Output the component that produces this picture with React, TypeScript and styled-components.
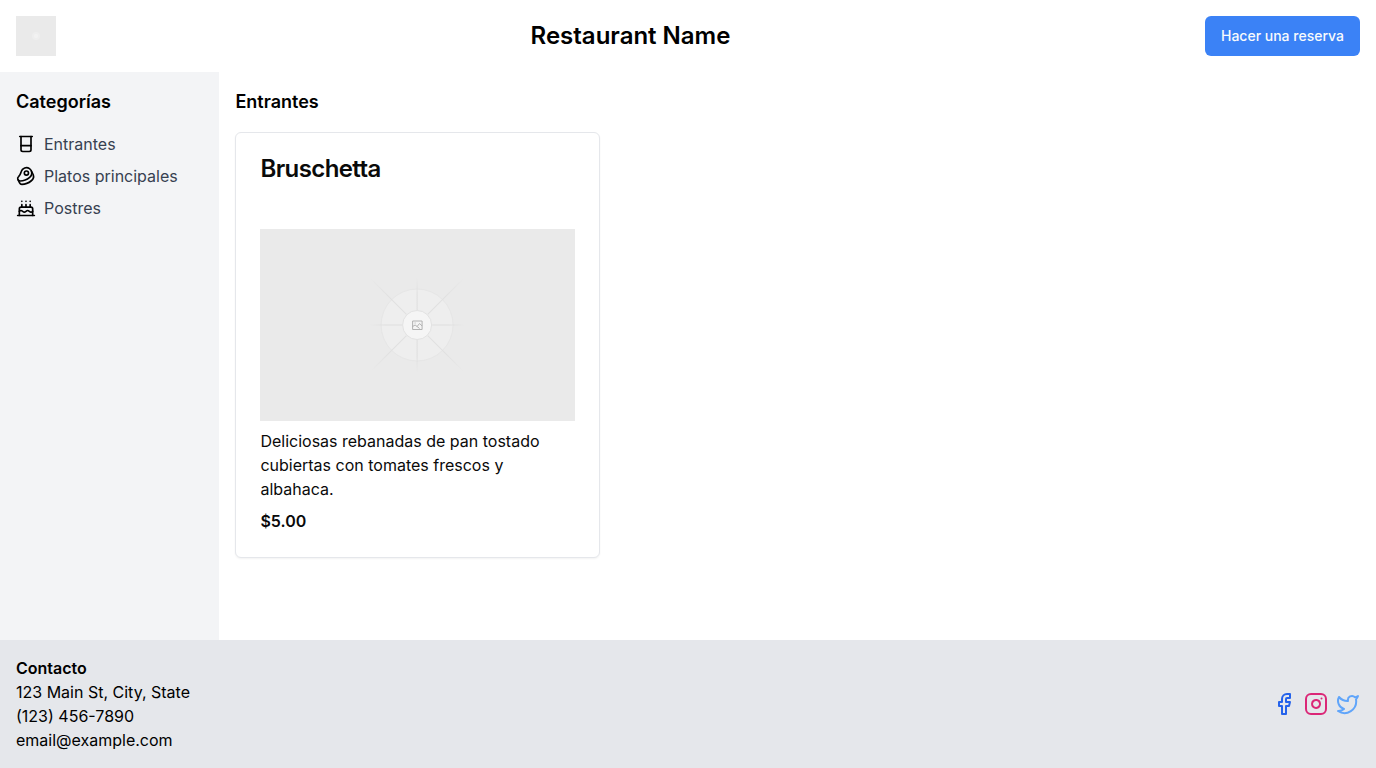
import React from 'react';
import styled, { createGlobalStyle } from 'styled-components';
import { Beaker, Beef, Cake, Facebook, Instagram, Twitter } from 'lucide-react';

const GlobalStyle = createGlobalStyle`
  *, *::before, *::after { box-sizing: border-box; }
  body {
    margin: 0;
    background: #ffffff;
    color: #000000;
    font-family: Inter, "Liberation Sans", sans-serif;
    font-size: 16px;
    line-height: 24px;
    font-optical-sizing: none;
  }
  h1, h2, h3, h4, p, ul { margin: 0; padding: 0; }
`;

const Page = styled.div`
  display: flex;
  flex-direction: column;
  min-height: 100vh;
`;

const Header = styled.header`
  display: flex;
  align-items: center;
  justify-content: space-between;
  padding: 16px;
`;

const Logo = styled.svg`
  display: block;
  width: 40px;
  height: 40px;
`;

const SiteTitle = styled.h1`
  font-size: 24px;
  line-height: 32px;
  font-weight: 600;
`;

const ReserveButton = styled.button`
  height: 40px;
  padding: 0 16px;
  border: 0;
  border-radius: 6px;
  background: #3b82f6;
  color: #f8fafc;
  font: 500 14px/20px Inter, "Liberation Sans", sans-serif;
  cursor: pointer;
`;

const Body = styled.div`
  display: flex;
  flex: 1;
`;

const Sidebar = styled.aside`
  width: 256px;
  padding: 16px;
  background: #f3f4f6;
`;

const SectionTitle = styled.h2`
  margin-bottom: 16px;
  font-size: 18px;
  line-height: 28px;
  font-weight: 600;
`;

const CategoryList = styled.ul`
  display: grid;
  gap: 8px;
  list-style: none;
`;

const CategoryItem = styled.li`
  display: flex;
  align-items: center;
  gap: 8px;
`;

const CategoryLink = styled.a`
  color: #374151;
  text-decoration: none;
`;

const Main = styled.main`
  width: 100%;
  padding: 16px;
`;

const DishGrid = styled.div`
  display: grid;
  grid-template-columns: repeat(3, minmax(0, 1fr));
  gap: 16px;
`;

const Card = styled.article`
  padding: 24px;
  border: 1px solid #e5e7eb;
  border-radius: 6px;
  background: #ffffff;
  color: #0a0a0a;
  box-shadow: 0 1px 2px rgba(0, 0, 0, 0.05);
`;

const DishName = styled.h3`
  margin-bottom: 48px;
  font-size: 24px;
  line-height: 24px;
  font-weight: 600;
  letter-spacing: -0.025em;
`;

const DishImage = styled.svg`
  display: block;
  width: 100%;
  height: 192px;
  background: #eaeaea;
`;

const Description = styled.p`
  margin-top: 8px;
`;

const Price = styled.p`
  margin-top: 8px;
  font-weight: 600;
`;

const Footer = styled.footer`
  display: flex;
  align-items: center;
  justify-content: space-between;
  padding: 16px;
  background: #e5e7eb;
`;

const ContactTitle = styled.h4`
  font-size: 16px;
  font-weight: 600;
`;

const Socials = styled.div`
  display: flex;
  gap: 8px;
`;

const SocialLink = styled.a<{ $color: string }>`
  display: flex;
  color: ${({ $color }) => $color};
`;

const categories = [
  { label: 'Entrantes', Icon: Beaker },
  { label: 'Platos principales', Icon: Beef },
  { label: 'Postres', Icon: Cake },
];

const socials = [
  { label: 'Facebook', Icon: Facebook, color: '#2563eb' },
  { label: 'Instagram', Icon: Instagram, color: '#db2777' },
  { label: 'Twitter', Icon: Twitter, color: '#60a5fa' },
];

const spokes = [0, 45, 90, 135, 180, 225, 270, 315];

function PlaceholderImage() {
  return (
    <DishImage viewBox="0 0 315 192" preserveAspectRatio="xMidYMid slice" role="img" aria-label="Bruschetta">
      <defs>
        <radialGradient id="long-spoke" gradientUnits="userSpaceOnUse" cx="0" cy="0" r="66">
          <stop offset="0.6" stopColor="#e0e0e0" />
          <stop offset="1" stopColor="#e0e0e0" stopOpacity="0" />
        </radialGradient>
        <radialGradient id="short-spoke" gradientUnits="userSpaceOnUse" cx="0" cy="0" r="48">
          <stop offset="0.65" stopColor="#dedede" />
          <stop offset="1" stopColor="#dedede" stopOpacity="0" />
        </radialGradient>
      </defs>
      <g transform="translate(157.5 96)" fill="none">
        <circle r="36" fill="#eeeeee" stroke="#e6e6e6" />
        {spokes.map((angle) => (
          <path
            key={angle}
            d={angle % 90 ? 'M15 0H66' : 'M15 0H48'}
            stroke={angle % 90 ? 'url(#long-spoke)' : 'url(#short-spoke)'}
            transform={`rotate(${angle})`}
          />
        ))}
        <circle r="14.5" fill="#f5f5f5" stroke="#e2e2e2" />
        <path d="M-4.5-4H5V4.5H-4.5ZM-4.5 1.5L-2 0L0 1.5L2.5-1.5L5 1M-2.5-2H-1.5M0 1.5L2.5 3.5" stroke="#aaaaaa" strokeWidth="0.9" />
      </g>
    </DishImage>
  );
}

export default function App() {
  return (
    <>
      <GlobalStyle />
      <Page>
        <Header>
          <Logo viewBox="0 0 40 40" role="img" aria-label="Logo">
            <path fill="#eaeaea" d="M0 0h40v40H0z" />
            <circle cx="20" cy="20" r="4" fill="#eeeeee" />
            <circle cx="20" cy="20" r="2" fill="#f2f2f2" />
          </Logo>
          <SiteTitle>Restaurant Name</SiteTitle>
          <ReserveButton type="button">Hacer una reserva</ReserveButton>
        </Header>
        <Body>
          <Sidebar>
            <SectionTitle>Categorías</SectionTitle>
            <nav aria-label="Categorías">
              <CategoryList>
                {categories.map(({ label, Icon }) => (
                  <CategoryItem key={label}>
                    <Icon size={20} aria-hidden />
                    <CategoryLink href="#">{label}</CategoryLink>
                  </CategoryItem>
                ))}
              </CategoryList>
            </nav>
          </Sidebar>
          <Main>
            <SectionTitle>Entrantes</SectionTitle>
            <DishGrid>
              <Card>
                <DishName>Bruschetta</DishName>
                <PlaceholderImage />
                <Description>
                  Deliciosas rebanadas de pan tostado cubiertas con tomates frescos y albahaca.
                </Description>
                <Price>$5.00</Price>
              </Card>
            </DishGrid>
          </Main>
        </Body>
        <Footer>
          <div>
            <ContactTitle>Contacto</ContactTitle>
            <p>123 Main St, City, State</p>
            <p>(123) 456-7890</p>
            <p>email@example.com</p>
          </div>
          <Socials>
            {socials.map(({ label, Icon, color }) => (
              <SocialLink key={label} href="#" aria-label={label} $color={color}>
                <Icon size={24} />
              </SocialLink>
            ))}
          </Socials>
        </Footer>
      </Page>
    </>
  );
}
